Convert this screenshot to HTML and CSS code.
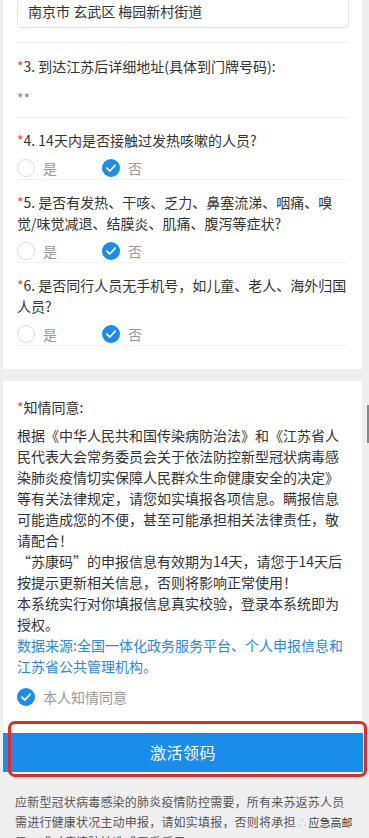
FILE: index.html
```html
<!DOCTYPE html>
<html lang="zh-CN">
<head>
<meta charset="utf-8">
<meta name="viewport" content="width=device-width, initial-scale=1">
<title>苏康码申报</title>
<link rel="stylesheet" href="styles.css">
</head>
<body>
<div class="page">
  <section class="card card-form">
    <div class="input-wrap">
      <div class="input">南京市 玄武区 梅园新村街道</div>
    </div>

    <div class="item item-q3">
      <div class="label req">3. 到达江苏后详细地址(具体到门牌号码):</div>
      <div class="value">**</div>
    </div>

    <div class="item">
      <div class="label req">4. 14天内是否接触过发热咳嗽的人员?</div>
      <div class="options">
        <div class="opt"><span class="circle"></span><span class="opt-text">是</span></div>
        <div class="opt"><span class="circle checked"><svg viewBox="0 0 18 18" width="18" height="18"><polyline points="4.8,9.2 7.8,12 13.2,6.2" /></svg></span><span class="opt-text">否</span></div>
      </div>
    </div>

    <div class="item">
      <div class="label req">5. 是否有发热、干咳、乏力、鼻塞流涕、咽痛、嗅觉/味觉减退、结膜炎、肌痛、腹泻等症状?</div>
      <div class="options">
        <div class="opt"><span class="circle"></span><span class="opt-text">是</span></div>
        <div class="opt"><span class="circle checked"><svg viewBox="0 0 18 18" width="18" height="18"><polyline points="4.8,9.2 7.8,12 13.2,6.2" /></svg></span><span class="opt-text">否</span></div>
      </div>
    </div>

    <div class="item">
      <div class="label req">6. 是否同行人员无手机号，如儿童、老人、海外归国人员?</div>
      <div class="options">
        <div class="opt"><span class="circle"></span><span class="opt-text">是</span></div>
        <div class="opt"><span class="circle checked"><svg viewBox="0 0 18 18" width="18" height="18"><polyline points="4.8,9.2 7.8,12 13.2,6.2" /></svg></span><span class="opt-text">否</span></div>
      </div>
    </div>
  </section>

  <section class="card card-consent">
    <div class="label req">知情同意:</div>
    <div class="notice">根据《中华人民共和国传染病防治法》和《江苏省人民代表大会常务委员会关于依法防控新型冠状病毒感染肺炎疫情切实保障人民群众生命健康安全的决定》等有关法律规定，请您如实填报各项信息。瞒报信息可能造成您的不便，甚至可能承担相关法律责任，敬请配合！<br>“苏康码”的申报信息有效期为14天，请您于14天后按提示更新相关信息，否则将影响正常使用！<br>本系统实行对你填报信息真实校验，登录本系统即为授权。<br><span class="source">数据来源:全国一体化政务服务平台、个人申报信息和江苏省公共管理机构。</span></div>
    <div class="agree">
      <span class="circle checked"><svg viewBox="0 0 18 18" width="18" height="18"><polyline points="4.8,9.2 7.8,12 13.2,6.2" /></svg></span>
      <span class="opt-text">本人知情同意</span>
    </div>
  </section>

  <div class="btn-wrap">
    <div class="btn">激活领码</div>
    <div class="highlight"></div>
  </div>

  <footer class="footer">
    <p>应新型冠状病毒感染的肺炎疫情防控需要，所有来苏返苏人员需进行健康状况主动申报，请如实填报，否则将承担<span class="watermark"><span class="wm-dots">∴</span>应急高邮</span>果，或对疫情防控造成严重后果。</p>
  </footer>
  <div class="scroll-thumb"></div>
</div>
</body>
</html>
```

FILE: styles.css
```css
html, body {
  margin: 0;
  padding: 0;
}
body {
  background: #efefef;
  font-family: "Noto Sans CJK SC", "Noto Sans", "Liberation Sans", sans-serif;
  color: #333;
  font-size: 14px;
  line-height: 21px;
  height: 838px;
  overflow: hidden;
}
.page {
  position: relative;
  width: 369px;
  height: 838px;
  overflow: hidden;
}
.card {
  background: #fff;
  margin-left: 3px;
  width: 359px;
  box-sizing: border-box;
  padding-left: 14px;
  padding-right: 13px;
}
.card-form {
  margin-top: -20px;
  padding-top: 14px;
  padding-bottom: 23px;
}
.input-wrap {
  padding-bottom: 14px;
  border-bottom: 1px solid #f2f2f2;
}
.input {
  height: 34px;
  box-sizing: border-box;
  border: 1px solid #e3e3e3;
  border-radius: 4px;
  padding: 6px 10px 0;
  line-height: 21px;
  color: #333;
}
.item {
  padding-top: 12px;
  border-bottom: 1px solid #f2f2f2;
}
.item-q3 {
  padding-top: 13px;
  padding-bottom: 8px;
}
.req::before {
  content: "*";
  color: #e8463e;
}
.value {
  margin-top: 11px;
  color: #888;
}
.options {
  display: flex;
  margin-top: 6px;
  height: 22px;
}
.opt {
  width: 85px;
  display: flex;
  align-items: center;
  gap: 8px;
}
.circle {
  width: 18px;
  height: 18px;
  box-sizing: border-box;
  border: 1px solid #dcdcdc;
  border-radius: 50%;
  display: inline-flex;
  flex: none;
  background: #fff;
}
.circle.checked {
  border: none;
  background: #1a8ce9;
}
.circle svg polyline {
  fill: none;
  stroke: #fff;
  stroke-width: 1.8;
  stroke-linecap: round;
  stroke-linejoin: round;
}
.opt-text {
  color: #999;
}
.card-consent {
  margin-top: 12px;
  padding-top: 16px;
  padding-bottom: 25px;
}
.notice {
  margin-top: 7px;
}
.source {
  color: #2b88dc;
}
.agree {
  margin-top: 9px;
  height: 22px;
  display: flex;
  align-items: center;
  gap: 8px;
}
.btn-wrap {
  position: relative;
  margin-left: 3px;
  width: 360px;
}
.btn {
  height: 39px;
  background: #1a8ce9;
  color: #fff;
  font-size: 16px;
  line-height: 39px;
  text-align: center;
  letter-spacing: 0.5px;
}
.highlight {
  position: absolute;
  top: -12px;
  left: 5px;
  right: -4px;
  bottom: -5px;
  border: 3px solid #ea2626;
  border-radius: 7px;
}
.footer {
  padding: 20px 15px 0;
}
.footer p {
  margin: 0;
  font-size: 12px;
  letter-spacing: 0.2px;
  line-height: 20px;
  color: #555;
}
.watermark {
  font-size: 11px;
  letter-spacing: 0;
  color: #333;
  text-shadow: 0 0 1px #fff;
}
.wm-dots {
  color: #bbb;
  margin: 0 1px;
}
.scroll-thumb {
  position: absolute;
  right: 0;
  top: 405px;
  width: 2px;
  height: 38px;
  background: #888;
}
```
